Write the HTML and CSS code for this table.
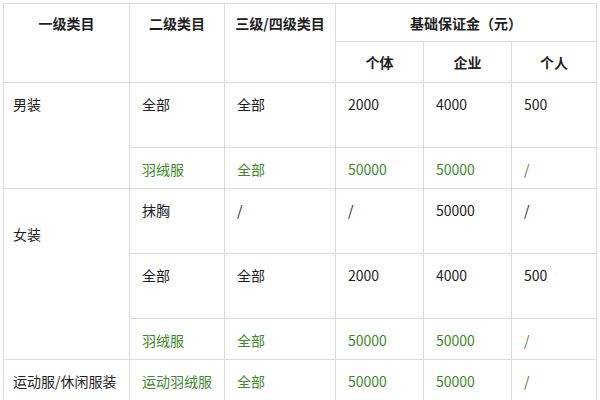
FILE: index.html
```html
<!DOCTYPE html>
<html lang="zh-CN">
<head>
<meta charset="utf-8">
<link rel="stylesheet" href="styles.css">
</head>
<body>
<table class="fee-table">
  <colgroup>
    <col class="c1"><col class="c2"><col class="c3"><col class="c4"><col class="c5"><col class="c6">
  </colgroup>
  <thead>
    <tr class="h1">
      <th rowspan="2" class="top">一级类目</th>
      <th rowspan="2" class="top">二级类目</th>
      <th rowspan="2" class="top">三级/四级类目</th>
      <th colspan="3">基础保证金（元）</th>
    </tr>
    <tr class="h2">
      <th>个体</th>
      <th>企业</th>
      <th>个人</th>
    </tr>
  </thead>
  <tbody>
    <tr class="tall">
      <td rowspan="2" class="first">男装</td>
      <td>全部</td><td>全部</td><td>2000</td><td>4000</td><td>500</td>
    </tr>
    <tr class="short green">
      <td>羽绒服</td><td>全部</td><td>50000</td><td>50000</td><td>/</td>
    </tr>
    <tr class="tall">
      <td rowspan="3" class="first low">女装</td>
      <td>抹胸</td><td>/</td><td>/</td><td>50000</td><td>/</td>
    </tr>
    <tr class="tall">
      <td>全部</td><td>全部</td><td>2000</td><td>4000</td><td>500</td>
    </tr>
    <tr class="short green">
      <td>羽绒服</td><td>全部</td><td>50000</td><td>50000</td><td>/</td>
    </tr>
    <tr class="short green">
      <td class="first dark">运动服/休闲服装</td><td>运动羽绒服</td><td>全部</td><td>50000</td><td>50000</td><td>/</td>
    </tr>
  </tbody>
</table>
</body>
</html>
```

FILE: styles.css
```css
html, body {
  margin: 0;
  padding: 0;
  background: #ffffff;
}
body {
  padding: 3px 0 0 3px;
  font-family: "Noto Sans CJK SC", "Noto Sans", sans-serif;
  font-size: 14px;
  color: #1e1e1e;
}
.fee-table {
  border-collapse: collapse;
  table-layout: fixed;
  width: 593px;
}
.c1 { width: 126px; }
.c2 { width: 95px; }
.c3 { width: 111px; }
.c4 { width: 88px; }
.c5 { width: 88px; }
.c6 { width: 85px; }
.fee-table th,
.fee-table td {
  border: 1px solid #dcdcdc;
  padding: 0 12px;
  line-height: 20px;
  vertical-align: top;
  text-align: left;
  overflow: hidden;
  white-space: nowrap;
}
.fee-table th {
  font-weight: bold;
  text-align: center;
  vertical-align: middle;
  padding: 0;
}
.fee-table th.top {
  vertical-align: top;
  padding-top: 9px;
}
.h1 { height: 38px; }
.h2 { height: 41px; }
.fee-table td { padding-top: 11px; }
.fee-table td.first { padding-left: 9px; padding-right: 4px; }
.tall { height: 65px; }
.short { height: 41px; }
.green td { color: #3d8a2c; }
.green td.dark { color: #1e1e1e; }
.fee-table td.low { padding-top: 35px; }
```
